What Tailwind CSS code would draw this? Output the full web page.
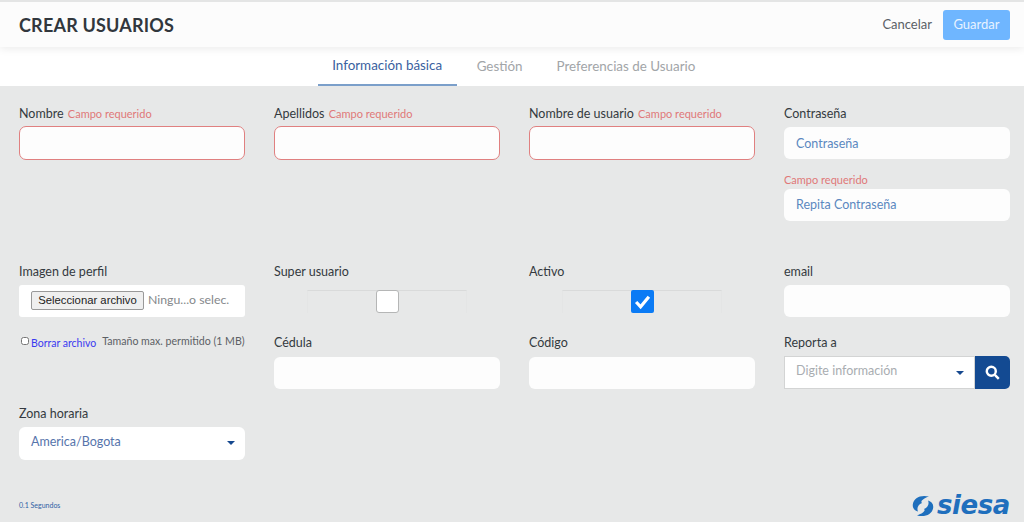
<!DOCTYPE html>
<html lang="es">
<head>
  <meta charset="UTF-8">
  <title>Crear usuarios</title>
  <script src="https://cdn.jsdelivr.net/npm/@tailwindcss/browser@4"></script>
</head>
<body class="bg-[#e7e8e8] h-[522px] overflow-hidden flex flex-col font-['Lato','Noto_Sans',sans-serif] text-[12.5px] text-[#343a40]">

  <!-- Header -->
  <header class="relative z-10 h-[47px] border-t-2 border-[#e4e5e5] bg-[#fcfcfc] shadow-[0_2px_8px_rgba(0,0,0,0.08)] flex items-center justify-between pl-[19px] pr-[14px]">
    <h1 class="text-[18px] font-bold tracking-[0.2px] text-[#31373d] mt-[2px]">CREAR USUARIOS</h1>
    <div class="flex items-center gap-[11px] text-[13px]">
      <span class="text-[#5a6066]">Cancelar</span>
      <button class="w-[67px] h-[30px] rounded-[3px] bg-[#6fb6ff] text-[#e8f3ff]">Guardar</button>
    </div>
  </header>

  <!-- Tabs -->
  <nav class="h-[39px] bg-white flex justify-center pr-[11px] text-[13.4px] text-[#a2a5a8]">
    <a class="w-[139px] pb-[1px] flex items-center justify-center border-b-2 border-[#7b9fca] text-[#3a5fa0]">Información básica</a>
    <a class="ml-[20px] pb-[1px] flex items-center">Gestión</a>
    <a class="ml-[34px] pb-[1px] flex items-center">Preferencias de Usuario</a>
  </nav>

  <!-- Form -->
  <main class="flex-1 px-[19px] pt-[18px] pr-[14px] grid grid-cols-4 gap-x-[29px] grid-rows-[158px_71px_71px_auto]">

    <div>
      <label class="block h-[22px] leading-[20px]">Nombre <span class="ml-px text-[11px] text-[#e07878]">Campo requerido</span></label>
      <input class="w-full h-[34px] rounded-[7px] border-[1.5px] border-[#e08080] bg-[#fdfdfd]">
    </div>
    <div>
      <label class="block h-[22px] leading-[20px]">Apellidos <span class="ml-px text-[11px] text-[#e07878]">Campo requerido</span></label>
      <input class="w-full h-[34px] rounded-[7px] border-[1.5px] border-[#e08080] bg-[#fdfdfd]">
    </div>
    <div>
      <label class="block h-[22px] leading-[20px]">Nombre de usuario <span class="ml-px text-[11px] text-[#e07878]">Campo requerido</span></label>
      <input class="w-full h-[34px] rounded-[7px] border-[1.5px] border-[#e08080] bg-[#fdfdfd]">
    </div>
    <div>
      <label class="block h-[23px] leading-[20px]">Contraseña</label>
      <input placeholder="Contraseña" class="w-full h-[32px] rounded-[6px] bg-[#fdfdfd] px-3 placeholder:text-[#5b88c0]">
      <p class="mt-[13px] h-[17px] text-[11px] text-[#e07878]">Campo requerido</p>
      <input placeholder="Repita Contraseña" class="w-full h-[32px] rounded-[6px] bg-[#fdfdfd] px-3 pb-[1px] placeholder:text-[#5b88c0]">
    </div>

    <div>
      <label class="block h-[23px] leading-[20px]">Imagen de perfil</label>
      <div class="h-[32px] rounded-[3px] bg-white flex items-center pl-3 pb-[2px] text-[12.3px]">
        <button class="h-[19px] w-[113px] rounded-[2px] border border-[#999] bg-[#efefef] text-[11.3px] text-[#222] font-['Liberation_Sans',sans-serif]">Seleccionar archivo</button>
        <span class="ml-1 text-[#85888b]">Ningu...o selec.</span>
      </div>
    </div>
    <div>
      <label class="block h-[18px] leading-[20px]">Super usuario</label>
      <div class="mt-[10px] ml-[33px] w-[160px] h-[23px] border-t border-x border-t-[#d9dada] border-x-[#e4e5e5] flex justify-center">
        <span class="block -mt-px w-[23px] h-[23px] rounded-[3px] border-[1.5px] border-[#b5b6b6] bg-white"></span>
      </div>
    </div>
    <div>
      <label class="block h-[18px] leading-[20px]">Activo</label>
      <div class="mt-[10px] ml-[33px] w-[160px] h-[23px] border-t border-x border-t-[#d9dada] border-x-[#e4e5e5] flex justify-center">
        <span class="flex items-center justify-center -mt-px w-[23px] h-[23px] rounded-[2px] bg-[#0b7bf5]">
          <svg viewBox="0 0 16 16" class="w-[17px] h-[17px]" fill="none" stroke="white" stroke-width="3"><path d="M2 8.500 6.200 13 14 3.500"/></svg>
        </span>
      </div>
    </div>
    <div>
      <label class="block h-[23px] leading-[20px]">email</label>
      <input class="w-full h-[32px] rounded-[6px] bg-[#fdfdfd]">
    </div>

    <div class="relative">
      <div class="flex items-start whitespace-nowrap">
        <input type="checkbox" class="mt-[4px] ml-[2px] w-[8px] h-[8px]">
        <a class="ml-[2px] mt-[3px] text-[10.5px] text-[#3a3af0]">Borrar archivo</a>
        <span class="ml-[6px] mt-[1px] text-[10.6px] text-[#5c6065]">Tamaño max. permitido (1 MB)</span>
      </div>
    </div>
    <div>
      <label class="block h-[24px] leading-[20px]">Cédula</label>
      <input class="w-full h-[32px] rounded-[6px] bg-[#fdfdfd]">
    </div>
    <div>
      <label class="block h-[24px] leading-[20px]">Código</label>
      <input class="w-full h-[32px] rounded-[6px] bg-[#fdfdfd]">
    </div>
    <div>
      <label class="block h-[23px] leading-[20px]">Reporta a</label>
      <div class="flex h-[33px]">
        <div class="flex-1 bg-white border border-[#d3d4d4] flex items-center justify-between pl-[11px] pr-[10px] text-[#a9adb1]">
          <span class="-mt-[3px]">Digite información</span>
          <span class="w-0 h-0 border-x-[4px] border-x-transparent border-t-[4px] border-t-[#16498f]"></span>
        </div>
        <button class="w-[35px] rounded-r-[5px] bg-[#134a92] flex items-center justify-center">
          <svg viewBox="0 0 16 16" class="w-[15px] h-[15px]" fill="none" stroke="white" stroke-width="2.6"><circle cx="6.700" cy="6.700" r="4.800"/><path d="m10.500 10.500 4.200 4.200"/></svg>
        </button>
      </div>
    </div>

    <div>
      <label class="block h-[23px] leading-[20px]">Zona horaria</label>
      <div class="h-[33px] rounded-[6px] bg-white flex items-center justify-between pl-3 pr-[10px] pb-[3px] text-[#5674ab]">
        <span>America/Bogota</span>
        <span class="mt-[2px] w-0 h-0 border-x-[4px] border-x-transparent border-t-[4px] border-t-[#16498f]"></span>
      </div>
    </div>
  </main>

  <!-- Footer -->
  <footer class="h-[38px] pl-[19px] pr-[14px] flex justify-between items-start">
    <span class="mt-[16px] text-[7px] text-[#2f5fa5]">0.1 Segundos</span>
    <div class="mt-[9px] flex items-end text-[#1f6fbd]">
      <svg viewBox="0 0 22 22" class="w-[22px] h-[22px]" fill="currentColor">
        <path d="M17 1.500C9 -.5 1.500 2.500 .8 9.500 .4 13 2.500 15.500 6 16.500 4.500 13.500 6 9.500 10 8 8 6.500 11 3.500 17 1.500Z"/>
        <path transform="rotate(180 11 11)" d="M17 1.500C9 -.5 1.500 2.500 .8 9.500 .4 13 2.500 15.500 6 16.500 4.500 13.500 6 9.500 10 8 8 6.500 11 3.500 17 1.500Z"/>
      </svg>
      <span class="ml-[3px] text-[26px] leading-[24px] font-bold italic tracking-[-0.4px] font-['DejaVu_Sans',sans-serif]">siesa</span>
    </div>
  </footer>
</body>
</html>
